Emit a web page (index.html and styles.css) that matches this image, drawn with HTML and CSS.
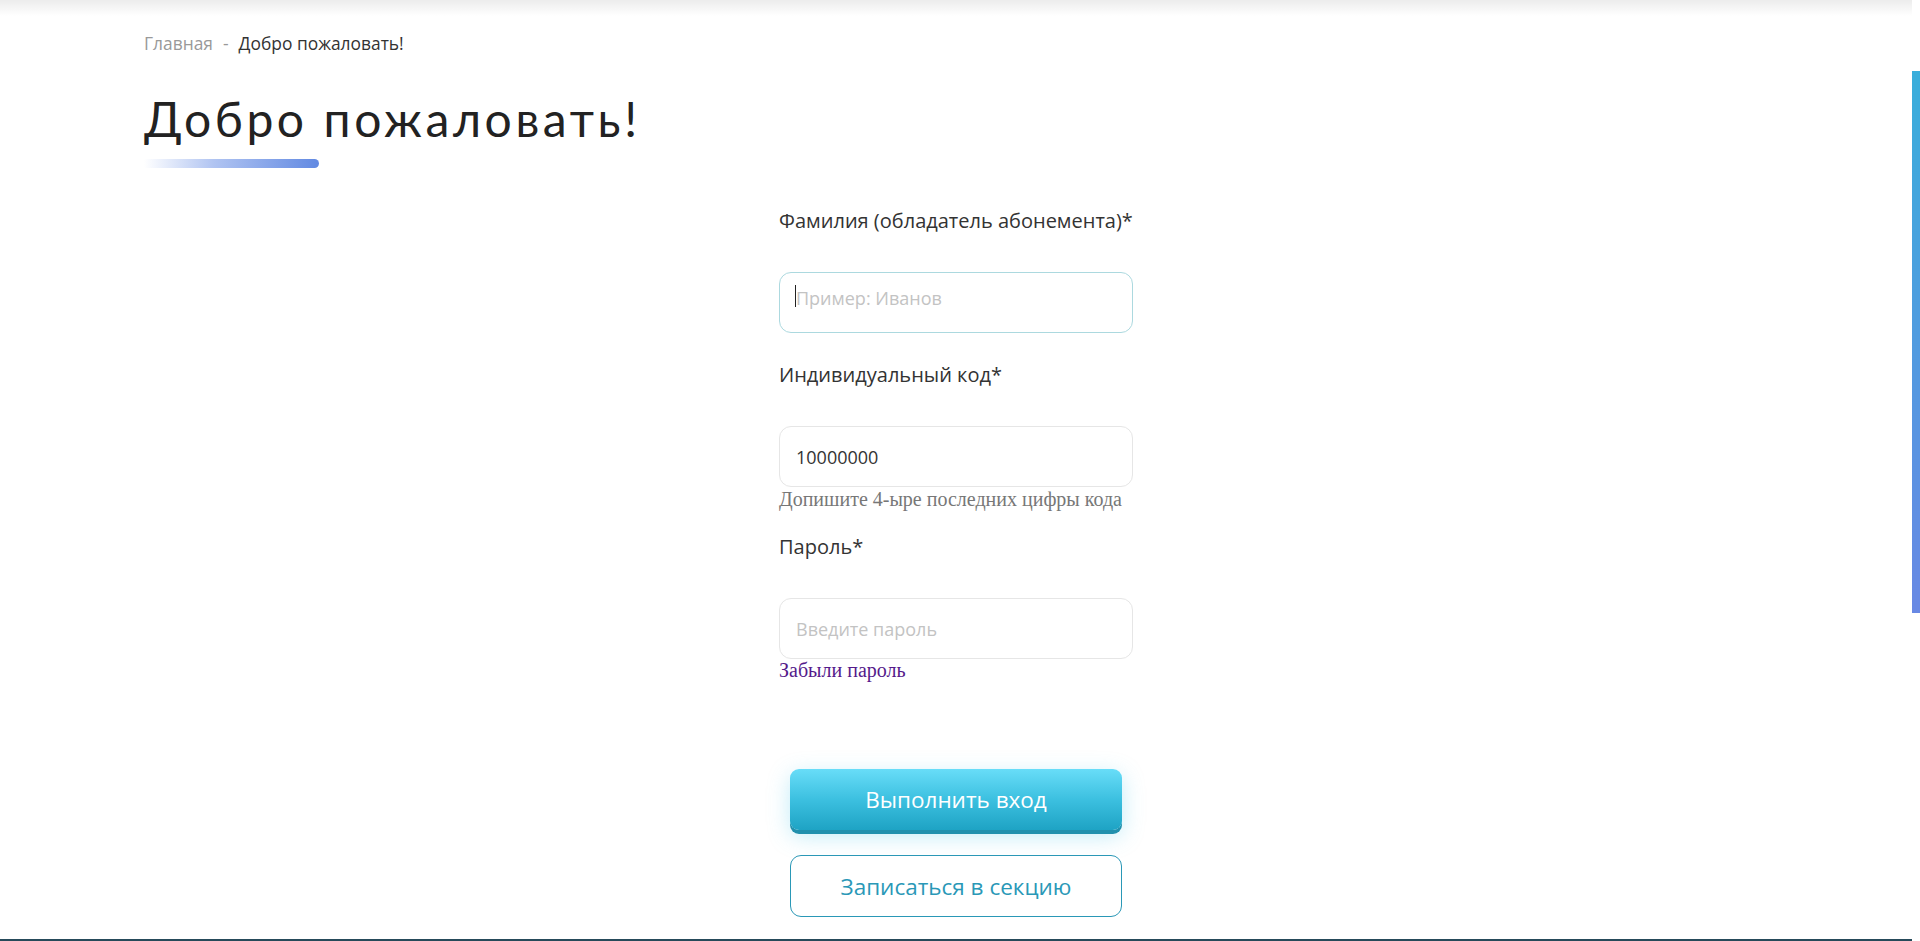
FILE: index.html
```html
<!DOCTYPE html>
<html lang="ru">
<head>
<meta charset="utf-8">
<title>Добро пожаловать!</title>
<link rel="stylesheet" href="styles.css">
</head>
<body>
<div class="page">
  <div class="top-shadow"></div>
  <main class="content">
    <nav class="breadcrumbs">
      <a class="crumb-link" href="#">Главная</a>
      <span class="crumb-sep">-</span>
      <span class="crumb-current">Добро пожаловать!</span>
    </nav>
    <h1 class="title">Добро пожаловать!</h1>
    <div class="title-bar"></div>

    <form class="login-form">
      <label class="field-label">Фамилия (обладатель абонемента)*</label>
      <div class="input-wrap">
        <input class="field-input focused" type="text" placeholder="Пример: Иванов">
        <span class="caret"></span>
      </div>

      <label class="field-label">Индивидуальный код*</label>
      <input class="field-input" type="text" value="10000000">
      <div class="hint">Допишите 4-ыре последних цифры кода</div>

      <label class="field-label">Пароль*</label>
      <input class="field-input" type="password" placeholder="Введите пароль">
      <a class="forgot" href="#">Забыли пароль</a>

      <div class="buttons">
        <button class="btn btn-primary" type="button">Выполнить вход</button>
        <button class="btn btn-outline" type="button">Записаться в секцию</button>
      </div>
    </form>
  </main>
  <div class="footer-line"></div>
</div>
<div class="scroll-thumb"></div>
</body>
</html>
```

FILE: styles.css
```css
html, body {
  margin: 0;
  padding: 0;
  height: 100%;
  overflow: hidden;
  background: #ffffff;
}

.page {
  width: calc(100% - 8px);
  height: 941px;
  display: flex;
  flex-direction: column;
  font-family: "Open Sans", "Liberation Sans", sans-serif;
  color: #333333;
}

.top-shadow {
  height: 16px;
  margin-bottom: -16px;
  background: linear-gradient(to bottom, rgba(0,0,0,0.075), rgba(0,0,0,0));
}

.content {
  flex: 1;
  padding: 32px 0 0 144px;
  display: flex;
  flex-direction: column;
}

.breadcrumbs {
  font-size: 17.4px;
  line-height: 22px;
  display: flex;
  align-items: center;
}

.crumb-link {
  color: #999999;
  text-decoration: none;
}

.crumb-sep {
  color: #999999;
  margin: 0 10px;
}

.crumb-current {
  color: #333333;
}

.title {
  margin: 37px 0 0 0;
  font-family: "Lato", "Open Sans", sans-serif;
  font-weight: 400;
  font-size: 48px;
  line-height: 56px;
  color: #222222;
  letter-spacing: 3.6px;
}

.title-bar {
  width: 175px;
  height: 9px;
  margin-top: 12px;
  border-radius: 0 5px 5px 0;
  background: linear-gradient(to right, rgba(98,137,228,0) 0%, rgba(98,137,228,0.5) 40%, #6189e2 100%);
}

.login-form {
  align-self: center;
  margin-left: -144px;
  margin-top: 39px;
  width: 354px;
  display: flex;
  flex-direction: column;
}

.field-label {
  font-size: 20px;
  line-height: 28px;
  color: #333333;
  margin-bottom: 37px;
}

.input-wrap {
  position: relative;
  display: flex;
}

.field-input {
  box-sizing: border-box;
  width: 354px;
  height: 61px;
  padding: 0 16px;
  border: 1px solid #e6e6e6;
  border-radius: 12px;
  font-family: "Open Sans", "Liberation Sans", sans-serif;
  font-size: 18px;
  color: #333333;
  outline: none;
  background: #ffffff;
}

.field-input::placeholder {
  color: #c3c3c3;
}

.field-input.focused {
  border-color: #acd9df;
  padding-bottom: 10px;
}

.caret {
  position: absolute;
  left: 16px;
  top: 13px;
  width: 1px;
  height: 22px;
  background: #222222;
}

.input-wrap + .field-label {
  margin-top: 28px;
}

.hint {
  font-family: "Liberation Serif", "Times New Roman", serif;
  font-size: 20px;
  line-height: 23px;
  color: #777777;
  margin-top: 1px;
  margin-bottom: 22px;
}

.forgot {
  font-family: "Liberation Serif", "Times New Roman", serif;
  font-size: 20px;
  line-height: 23px;
  color: #551a8b;
  text-decoration: none;
  margin-top: 0;
  align-self: flex-start;
}

.buttons {
  margin-top: 87px;
  display: flex;
  flex-direction: column;
  align-items: center;
  gap: 25px;
}

.btn {
  box-sizing: border-box;
  width: 332px;
  font-family: "Open Sans", "Liberation Sans", sans-serif;
  font-size: 22.5px;
  cursor: pointer;
}

.btn-primary {
  height: 61px;
  border: none;
  border-radius: 9px;
  color: #ffffff;
  background: linear-gradient(to bottom, #68ddf8 0%, #3cc0e0 50%, #1ea3c4 100%);
  box-shadow: 0 4px 0 #2190ad, 0 6px 22px rgba(80, 200, 235, 0.35);
}

.btn-primary:hover {
  background: linear-gradient(to bottom, #5cd4f0, #1a9cbd);
}

.btn-outline {
  height: 62px;
  border: 1px solid #2a98b7;
  border-radius: 11px;
  background: #ffffff;
  color: #2a98b7;
}

.footer-line {
  height: 2px;
  background: #264a5a;
}

.scroll-thumb {
  position: fixed;
  right: 0;
  top: 71px;
  width: 8px;
  height: 542px;
  background: linear-gradient(to bottom, #39aedb, #6888e4);
}
```
